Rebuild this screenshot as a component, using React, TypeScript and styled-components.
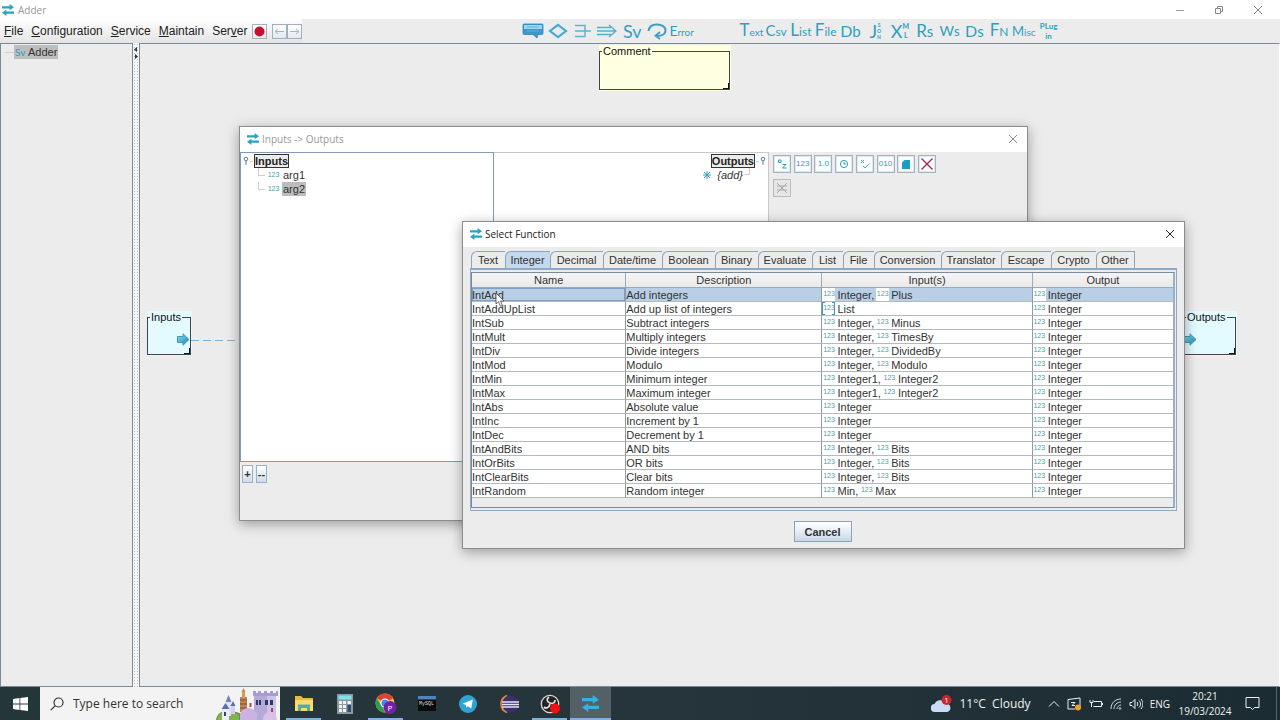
import React from 'react';
import styled, { createGlobalStyle, css } from 'styled-components';

const SANS = '"Liberation Sans", Arial, sans-serif';
const UI = '"Open Sans", "Noto Sans", sans-serif';
const THIN = 'Lato, "Liberation Sans", sans-serif';
const TEAL = '#2f9fc0';
const LINE = '#7a8a99';

const GlobalStyle = createGlobalStyle`
  *, *::before, *::after { box-sizing: border-box; }
  html, body { margin: 0; padding: 0; }
  body { background: #ececec; color: #333; font-family: ${SANS}; font-size: 11px; line-height: 14px; }
  button, input { font: inherit; color: inherit; margin: 0; }
  svg { display: block; flex: none; }
`;

/* ---------- application frame ---------- */

const Desktop = styled.div`
  position: relative;
  display: flex;
  flex-direction: column;
  min-height: 100vh;
  overflow: hidden;
`;

const FrameTitle = styled.header`
  display: flex;
  align-items: center;
  gap: 4px;
  height: 19px;
  padding: 0 14px 0 2px;
  background: #fff;
  color: #999;
  font-family: ${UI};
`;

const FrameName = styled.h1`
  flex: 1;
  margin: 0;
  font-size: 10px;
  line-height: 18px;
  font-weight: 400;
`;

const FrameControls = styled.div`
  display: flex;
  gap: 23px;
`;

const PlainButton = styled.button`
  display: flex;
  align-items: center;
  justify-content: center;
  padding: 0;
  border: 0;
  background: none;
`;

const ControlButton = styled(PlainButton)`
  width: 16px;
  height: 16px;
`;

const MenuRow = styled.div`
  display: flex;
  align-items: stretch;
  height: 24px;
  background: #ececec;
`;

const MenuSide = styled.div`
  flex: 0 0 521px;
  display: flex;
`;

const MenuBar = styled.nav`
  display: flex;
  align-items: center;
  gap: 8px;
  padding-left: 4px;
  background: linear-gradient(#fefefe, #e4e4e4);
  font-size: 12px;
  color: #222;
`;

const MenuItem = styled(PlainButton)`
  display: block;
  line-height: 16px;
`;

const MenuTools = styled.div`
  display: flex;
  align-items: center;
  padding-left: 4px;
  background: linear-gradient(#fefefe, #e4e4e4);
`;

const SquareButton = styled.button<{ $gap?: number }>`
  display: flex;
  align-items: center;
  justify-content: center;
  width: 15px;
  height: 15px;
  margin-right: ${p => p.$gap ?? 0}px;
  padding: 0;
  border: 1px solid #9fb0c2;
  background: linear-gradient(#fff, #e3e9f0);
`;

const IconGroup = styled.div<{ $count: number; $width: number }>`
  display: grid;
  grid-template-columns: repeat(${p => p.$count}, minmax(0, 1fr));
  width: ${p => p.$width}px;
  margin-right: 45px;
`;

const IconButton = styled(PlainButton)`
  min-width: 0;
  color: ${TEAL};
`;

const GlyphWord = styled.span<{ $cap?: number; $rest?: number }>`
  display: block;
  white-space: nowrap;
  font-family: ${THIN};
  font-size: ${p => p.$rest ?? 13}px;
  line-height: 22px;
  &::first-letter { font-size: ${p => p.$cap ?? 17}px; }
`;

const GlyphPair = styled.span`
  display: flex;
  align-items: center;
  font-family: ${THIN};
  font-size: 18px;
  line-height: 20px;
`;

const GlyphStack = styled.span<{ $size: number; $step: number }>`
  display: grid;
  justify-items: center;
  font-family: ${THIN};
  font-size: ${p => p.$size}px;
  line-height: ${p => p.$step}px;
  font-weight: 700;
`;

/* ---------- workspace ---------- */

const Workspace = styled.div`
  flex: 1;
  display: flex;
  min-height: 643px;
`;

const Explorer = styled.aside`
  flex: 0 0 133px;
  border: 1px solid ${LINE};
  padding: 1px 0 0 4px;
`;

const TreeLine = styled.div`
  display: flex;
  align-items: center;
  height: 14px;
`;

const TreeDash = styled.span`
  width: 9px;
  border-top: 1px solid #c4d0dc;
`;

const ShortDash = styled.span`
  width: 3px;
  border-top: 1px solid #cfcfcf;
`;

const TreeLabel = styled.span<{ $selected?: boolean; $italic?: boolean }>`
  display: flex;
  align-items: center;
  gap: 1px;
  padding: 0 1px;
  line-height: 14px;
  background: ${p => (p.$selected ? '#bdbdbd' : 'transparent')};
  font-style: ${p => (p.$italic ? 'italic' : 'normal')};
`;

const ServiceMark = styled.span`
  width: 12px;
  color: ${TEAL};
  font-family: ${THIN};
  font-size: 10px;
`;

const Splitter = styled.div`
  flex: 0 0 6px;
  padding-top: 4px;
  background-color: #f6f6f6;
  background-image: radial-gradient(#b9c0c8 1px, transparent 1px);
  background-size: 3px 3px;
`;

const Canvas = styled.main`
  position: relative;
  flex: 1;
  min-width: 0;
  border: 1px solid ${LINE};
  border-right-color: #fff;
  background: #ececec;
`;

const Node = styled.div<{ $x: number; $y: number; $w: number; $h: number; $fill: string }>`
  position: absolute;
  left: ${p => p.$x}px;
  top: ${p => p.$y}px;
  width: ${p => p.$w}px;
  height: ${p => p.$h}px;
  display: flex;
  padding: 0 1px 1px 0;
  background: ${p => p.$fill};
`;

const NodeFrame = styled.fieldset<{ $end?: boolean }>`
  position: relative;
  flex: 1;
  min-width: 0;
  display: flex;
  justify-content: ${p => (p.$end ? 'flex-end' : 'flex-start')};
  margin: 0;
  padding: 10px 0 0;
  border: 1px solid #444;
  color: #111;
  &::after {
    content: '';
    position: absolute;
    right: 0;
    bottom: 0;
    width: 6px;
    height: 6px;
    border: solid #111;
    border-width: 0 1px 1px 0;
  }
`;

const NodeLegend = styled.legend`
  margin-left: 2px;
  padding: 0 1px;
  line-height: 12px;
`;

const Wire = styled.div`
  position: absolute;
  left: 51px;
  top: 296px;
  width: 60px;
  height: 1px;
  background: repeating-linear-gradient(90deg, #7fb0d8 0 8px, transparent 8px 12px);
`;

/* ---------- dialogs ---------- */

const Dialog = styled.section<{ $x: number; $y: number; $w: number }>`
  position: absolute;
  left: ${p => p.$x}px;
  top: ${p => p.$y}px;
  width: ${p => p.$w}px;
  border: 1px solid #8c8c8c;
  background: #ececec;
  box-shadow: 0 3px 12px rgba(0, 0, 0, 0.35);
`;

const DialogTitle = styled.header<{ $active?: boolean }>`
  display: flex;
  align-items: center;
  gap: 3px;
  height: 25px;
  padding: 0 6px 1px 7px;
  background: #fff;
  color: ${p => (p.$active ? '#222' : '#999')};
  font-family: ${UI};
`;

const DialogName = styled.h2`
  flex: 1;
  margin: 0;
  font-size: 10px;
  font-weight: 400;
  line-height: 16px;
`;

const MapperBody = styled.div`
  display: grid;
  grid-template-columns: 254px 275px 1fr;
  height: 310px;
`;

const InputTree = styled.div`
  border: 1px solid #7f9db9;
  background: #fff;
  padding: 1px 0 0 2px;
`;

const OutputTree = styled.div`
  display: flex;
  flex-direction: column;
  align-items: flex-end;
  padding: 1px 2px 0 0;
  border: 1px solid #c9c9c9;
  border-left: 0;
  background: #fff;
`;

const RootLine = styled.div`
  display: flex;
  align-items: center;
  gap: 1px;
  height: 14px;
`;

const RootLabel = styled.strong`
  border: 1px solid #333;
  background: #ececec;
  color: #222;
  line-height: 12px;
`;

const Branch = styled.ul`
  margin: 0 0 0 15px;
  padding: 0;
  list-style: none;
`;

const BranchItem = styled.li`
  display: flex;
  align-items: center;
  gap: 2px;
  height: 14px;
  &::before {
    content: '';
    align-self: flex-start;
    width: 7px;
    height: 8px;
    border: solid #cfcfcf;
    border-width: 0 0 1px 1px;
  }
`;

const OutputItem = styled.div`
  display: flex;
  align-items: center;
  gap: 5px;
  height: 14px;
  margin-right: 16px;
  &::after {
    content: '';
    align-self: flex-start;
    width: 6px;
    height: 7px;
    margin-left: -5px;
    border: solid #cfcfcf;
    border-width: 0 1px 1px 0;
  }
`;

const ToolPanel = styled.div`
  display: flex;
  flex-direction: column;
  gap: 6px;
  padding: 3px 3px 3px 4px;
`;

const ToolRow = styled.div`
  display: flex;
  justify-content: space-between;
  width: 163px;
`;

const ToolButton = styled.button`
  display: flex;
  align-items: center;
  justify-content: center;
  width: 18px;
  height: 18px;
  padding: 0;
  border: 1px solid #a3b3c2;
  background: #fbfdfe;
  box-shadow: inset 0 0 0 1px #dfe6ec;
  color: #2f9fb5;
  font-size: 8px;
  line-height: 14px;
  &:disabled { background: #e6e6e6; box-shadow: none; border-color: #bbb; }
`;

const MapperFooter = styled.footer`
  display: flex;
  gap: 3px;
  height: 58px;
  padding: 3px 2px;
`;

const StepButton = styled.button`
  width: 11px;
  height: 18px;
  padding: 0;
  border: 1px solid #9fb0c2;
  background: linear-gradient(#fff, #cfdcea);
  font-weight: 700;
`;

/* ---------- function picker ---------- */

const TabList = styled.div`
  display: flex;
  height: 17px;
  margin: 4px 7px 0 8px;
`;

const Tab = styled.button<{ $width: number; $active?: boolean }>`
  flex: 0 0 ${p => p.$width}px;
  padding: 0 1px 0 0;
  border: 1px solid #8fa3b8;
  border-width: 1px 0 0 1px;
  border-top-left-radius: 6px 6px;
  background: ${p => (p.$active ? '#c4d8ee' : '#ececec')};
  line-height: 16px;
  white-space: nowrap;
  &:last-child { border-right-width: 1px; }
`;

const TabPane = styled.div`
  height: 243px;
  margin: 0 7px;
  padding: 2px 1px 2px 0;
  border: 1px solid #8fa8c4;
  border-top-width: 2px;
`;

const Scroller = styled.div`
  height: 100%;
  border: 1px solid ${LINE};
  border-right-width: 2px;
  border-right-color: #9bb0c6;
`;

const Table = styled.table`
  width: 100%;
  table-layout: fixed;
  border-collapse: separate;
  border-spacing: 0;
`;

const HeadCell = styled.th<{ $share?: number }>`
  width: ${p => (p.$share ? `${p.$share}%` : 'auto')};
  height: 15px;
  padding: 0;
  border: solid #9aabb9;
  border-width: 0 1px 1px 0;
  background: linear-gradient(#f6f6f6, #e9e9e9);
  font-weight: 400;
  line-height: 14px;
  &:last-child { border-right: 0; }
`;

const Cell = styled.td<{ $focus?: boolean }>`
  height: 14px;
  padding: 1px 0 0;
  border: solid #b3b9bf;
  border-width: 0 1px 1px 0;
  border-right-color: #8f9ba8;
  line-height: 12px;
  white-space: nowrap;
  &:last-child { border-right: 0; }
  ${p => p.$focus && css`box-shadow: inset 0 0 0 1px #7f9fc4;`}
`;

const Row = styled.tr<{ $selected?: boolean }>`
  background: ${p => (p.$selected ? '#b8cfe5' : '#fff')};
`;

const Params = styled.div`
  display: flex;
  align-items: flex-end;
  gap: 2px;
  height: 12px;
`;

const corner = `linear-gradient(${TEAL}, ${TEAL}) no-repeat`;

const TypeMark = styled.span<{ $list?: boolean }>`
  flex: 0 0 13px;
  height: 13px;
  background: #fff;
  color: #3fa5a8;
  font-size: 7px;
  line-height: 12px;
  text-align: center;
  ${p => p.$list && css`
    background:
      ${corner} 0 0 / 3px 1px, ${corner} 100% 0 / 3px 1px,
      ${corner} 0 100% / 3px 1px, ${corner} 100% 100% / 3px 1px,
      ${corner} 0 0 / 1px 100%, ${corner} 100% 0 / 1px 100%, #fff;
  `}
`;

const PickerFooter = styled.footer`
  display: flex;
  justify-content: center;
  height: 37px;
  padding: 10px 2px 0 0;
`;

const CancelButton = styled.button`
  width: 58px;
  height: 21px;
  padding: 0;
  border: 1px solid #8ea1b5;
  background: linear-gradient(#fff, #e6edf5 50%, #c6d7e8);
  font-weight: 700;
`;

const Pointer = styled.svg`
  position: absolute;
  left: 32px;
  top: 70px;
`;

/* ---------- taskbar ---------- */

const Taskbar = styled.footer`
  display: flex;
  height: 33px;
  background: linear-gradient(90deg, #25363b, #26353b 50%, #1b2c32);
  color: #f0f0f0;
  font-family: ${UI};
`;

const StartButton = styled(PlainButton)`
  width: 40px;
`;

const Search = styled.label`
  display: flex;
  align-items: center;
  gap: 9px;
  width: 240px;
  padding-left: 10px;
  background: #f3f3f3;
  color: #333;
`;

const SearchInput = styled.input`
  flex: 1;
  min-width: 0;
  padding: 0;
  border: 0;
  outline: 0;
  background: transparent;
  font-size: 12px;
  &::placeholder { color: #333; opacity: 1; }
`;

const TaskList = styled.div`
  flex: 1;
  display: flex;
  padding-left: 3px;
`;

const TaskButton = styled(PlainButton)<{ $open?: boolean; $active?: boolean }>`
  width: 41px;
  background: ${p => (p.$active ? '#536166' : 'none')};
  box-shadow: ${p => (p.$active ? 'inset 0 -2px #7fb2dc' : 'none')};
  position: relative;
  ${p => p.$open && css`
    &::after {
      content: '';
      position: absolute;
      left: 3px;
      right: 3px;
      bottom: 0;
      height: 2px;
      background: #7fb2dc;
    }
  `}
`;

const Weather = styled(PlainButton)`
  gap: 7px;
  margin-right: 10px;
  font-size: 12px;
  white-space: pre;
`;

const Tray = styled.div`
  display: flex;
  align-items: center;
  gap: 7px;
  font-size: 10px;
`;

const Clock = styled.time`
  width: 54px;
  margin: 0 6px 0 1px;
  text-align: center;
  font-size: 10px;
  line-height: 15px;
`;

const ShowDesktop = styled.div`
  width: 4px;
  margin-left: 9px;
  border-left: 1px solid #56656a;
  align-self: stretch;
`;

/* ---------- drawings ---------- */

const SwapIcon = ({ size = 12, color = '#2aa3bd' }: { size?: number; color?: string }) => (
  <svg width={size} height={size} viewBox="0 0 12 12" fill={color} aria-hidden="true">
    <path d="M0 2.200h7.600V0L12 3.300 7.600 6.200V4.400H0z" />
    <path d="M12 7.600H4.400V5.800L0 8.700 4.400 12V9.800H12z" />
  </svg>
);

const CloseIcon = ({ color }: { color: string }) => (
  <svg width="10" height="10" viewBox="0 0 10 10" stroke={color} fill="none" aria-hidden="true">
    <path d="M1 1l8 8M9 1L1 9" />
  </svg>
);

const ArrowNode = () => (
  <svg width="13" height="13" viewBox="0 0 13 13" aria-hidden="true">
    <defs>
      <linearGradient id="arrowFill" x1="0" y1="0" x2="1" y2="1">
        <stop offset="0" stopColor="#8fdcf2" />
        <stop offset="1" stopColor="#1487ab" />
      </linearGradient>
    </defs>
    <path d="M.5 3.500h5.500V.8l6 5.700-6 5.700V9.500H.5z" fill="url(#arrowFill)" stroke="#3b9dbb" />
  </svg>
);

const HandleIcon = () => (
  <svg width="6" height="10" viewBox="0 0 6 10" fill="none" stroke="#5b7d99" aria-hidden="true">
    <circle cx="3" cy="3" r="1.800" />
    <path d="M3 5v4" />
  </svg>
);

const CastleArt = () => (
  <svg width="66" height="33" viewBox="0 0 66 33" aria-hidden="true">
    <path d="M2 33c1-7 7-10 15-9s13 3 16 9z" fill="#5f9a45" />
    <path d="M5 28c5-5 14-4 20 0v5H3z" fill="#7fb454" />
    <rect x="40" y="8" width="22" height="25" fill="#b3aad8" />
    <rect x="53" y="8" width="9" height="25" fill="#cbc3e8" />
    <path d="M39 9V4h3v2h2V4h3v2h3V4h3v2h3V4h3v2h3V4h2v5z" fill="#a69ccf" />
    <rect x="42" y="13" width="2" height="5" fill="#2f3763" />
    <rect x="45" y="13" width="2" height="5" fill="#2f3763" />
    <rect x="51" y="13" width="3" height="5" fill="#2f3763" />
    <rect x="56" y="13" width="3" height="5" fill="#2f3763" />
    <rect x="26" y="10" width="7" height="15" fill="#c18552" />
    <path d="M26 13h7M26 17h7M26 21h7" stroke="#7d4a34" />
    <rect x="28" y="4" width="3" height="7" fill="#d99c4f" />
    <path d="M27.500 5l2-4 2 4z" fill="#c98a45" />
    <rect x="12" y="15" width="5" height="14" fill="#e3e0f4" />
    <path d="M11.500 15l3-7 3 7z" fill="#7184b9" />
    <rect x="8" y="22" width="7" height="11" fill="#eeecfa" />
    <path d="M7.500 22l4-6 4 6z" fill="#5672ac" />
    <rect x="10" y="25" width="2" height="4" fill="#394575" />
    <rect x="17" y="19" width="4" height="8" fill="#d5cfee" />
    <path d="M16.500 19l2.500-5 2.500 5z" fill="#5672ac" />
    <path d="M26 33v-5c1-5 5-7 8-7s8 2 9 7v5z" fill="#cbb2e2" />
    <path d="M35.500 20v-4h2v4z" fill="#b6434e" />
    <path d="M49 33c0-6 4-8 7-8s7 3 7 8z" fill="#dcc0e6" />
    <path d="M57 25v-4h2v4z" fill="#b6434e" />
  </svg>
);

/* ---------- data ---------- */

const MENUS: [string, string, string][] = [
  ['', 'F', 'ile'],
  ['', 'C', 'onfiguration'],
  ['', 'S', 'ervice'],
  ['', 'M', 'aintain'],
  ['Ser', 'v', 'er'],
];

const WORDS: { id: string; cap: number; rest: number }[] = [
  { id: 'Text', cap: 17, rest: 10 },
  { id: 'Csv', cap: 15, rest: 12 },
  { id: 'List', cap: 17, rest: 12 },
  { id: 'File', cap: 17, rest: 12 },
  { id: 'Db', cap: 16, rest: 15 },
];

const SHORT_WORDS: { id: string; cap: number; rest: number }[] = [
  { id: 'Rs', cap: 17, rest: 15 },
  { id: 'Ws', cap: 14, rest: 13 },
  { id: 'Ds', cap: 16, rest: 15 },
  { id: 'FN', cap: 17, rest: 12 },
];

const TABS: [string, number][] = [
  ['Text', 34], ['Integer', 45], ['Decimal', 53], ['Date/time', 59], ['Boolean', 53],
  ['Binary', 43], ['Evaluate', 54], ['List', 31], ['File', 31], ['Conversion', 67],
  ['Translator', 60], ['Escape', 50], ['Crypto', 45], ['Other', 39],
];

const FUNCTIONS: [string, string, string[]][] = [
  ['IntAdd', 'Add integers', ['Integer', 'Plus']],
  ['IntAddUpList', 'Add up list of integers', ['List']],
  ['IntSub', 'Subtract integers', ['Integer', 'Minus']],
  ['IntMult', 'Multiply integers', ['Integer', 'TimesBy']],
  ['IntDiv', 'Divide integers', ['Integer', 'DividedBy']],
  ['IntMod', 'Modulo', ['Integer', 'Modulo']],
  ['IntMin', 'Minimum integer', ['Integer1', 'Integer2']],
  ['IntMax', 'Maximum integer', ['Integer1', 'Integer2']],
  ['IntAbs', 'Absolute value', ['Integer']],
  ['IntInc', 'Increment by 1', ['Integer']],
  ['IntDec', 'Decrement by 1', ['Integer']],
  ['IntAndBits', 'AND bits', ['Integer', 'Bits']],
  ['IntOrBits', 'OR bits', ['Integer', 'Bits']],
  ['IntClearBits', 'Clear bits', ['Integer', 'Bits']],
  ['IntRandom', 'Random integer', ['Min', 'Max']],
];

/* ---------- parts ---------- */

const FlowIcons = () => (
  <IconGroup $count={7} $width={173}>
    <IconButton aria-label="Comment">
      <svg width="22" height="16" viewBox="0 0 22 16">
        <path d="M2 1h18q1 0 1 1v8q0 1.500-1 1.500h-4L15 15l-4-3.500H2Q1 11.500 1 10V2q0-1 1-1z" fill="#3d97cb" stroke="#2f86b8" strokeWidth=".8" />
        <path d="M2 2h18v4H2z" fill="#9ed6f0" />
        <path d="M5 4h12M5 8h12" stroke="#5eb2db" />
      </svg>
    </IconButton>
    <IconButton aria-label="Decision">
      <svg width="20" height="16" viewBox="0 0 20 16" fill="none" stroke="#43acd0" strokeWidth="2.200">
        <path d="M10 1.800L18 8l-8 6.200L2 8z" />
      </svg>
    </IconButton>
    <IconButton aria-label="Merge">
      <svg width="18" height="14" viewBox="0 0 18 14" fill="none" stroke="#5db4cf" strokeWidth="1.500">
        <path d="M1 1.500h10v11H1M1 7h16" />
      </svg>
    </IconButton>
    <IconButton aria-label="Parallel">
      <svg width="20" height="14" viewBox="0 0 20 14" fill="none" stroke="#4fb0d0" strokeWidth="1.400">
        <path d="M0 3.500h14M0 7h18M0 10.500h14M12 1l7 6-7 6" />
      </svg>
    </IconButton>
    <IconButton aria-label="Service"><GlyphPair>Sv</GlyphPair></IconButton>
    <IconButton aria-label="Loop">
      <svg width="20" height="17" viewBox="0 0 20 17" fill="none" stroke="#3f9fc6" strokeWidth="2">
        <path d="M1.500 8C2 4 5 1.500 10 1.500S18.500 4 18.500 7.500 15 13 9.500 13" />
        <path d="M13 9L8.500 12.800 13 16" strokeWidth="1.800" />
      </svg>
    </IconButton>
    <IconButton aria-label="Error"><GlyphWord $cap={14} $rest={10}>Error</GlyphWord></IconButton>
  </IconGroup>
);

const TypeIcons = () => (
  <IconGroup $count={13} $width={322}>
    {WORDS.map(w => (
      <IconButton key={w.id}><GlyphWord $cap={w.cap} $rest={w.rest}>{w.id}</GlyphWord></IconButton>
    ))}
    <IconButton>
      <GlyphPair>J<GlyphStack $size={5} $step={6}><span>S</span><span>O</span><span>N</span></GlyphStack></GlyphPair>
    </IconButton>
    <IconButton>
      <GlyphPair>X<GlyphStack $size={7} $step={9}><span>M</span><span>L</span></GlyphStack></GlyphPair>
    </IconButton>
    {SHORT_WORDS.map(w => (
      <IconButton key={w.id}><GlyphWord $cap={w.cap} $rest={w.rest}>{w.id}</GlyphWord></IconButton>
    ))}
    <IconButton><GlyphWord $cap={13} $rest={10}>Misc</GlyphWord></IconButton>
    <IconButton><GlyphStack $size={8} $step={10}><span>PLug</span><span>in</span></GlyphStack></IconButton>
  </IconGroup>
);

const MapperDialog = () => (
  <Dialog $x={239} $y={126} $w={789} aria-label="Inputs to Outputs">
    <DialogTitle>
      <SwapIcon />
      <DialogName>Inputs -&gt; Outputs</DialogName>
      <ControlButton aria-label="Close"><CloseIcon color="#888" /></ControlButton>
    </DialogTitle>
    <MapperBody>
      <InputTree>
        <RootLine><HandleIcon /><ShortDash /><RootLabel>Inputs</RootLabel></RootLine>
        <Branch>
          {['arg1', 'arg2'].map(name => (
            <BranchItem key={name}>
              <TypeMark>123</TypeMark>
              <TreeLabel $selected={name === 'arg2'}>{name}</TreeLabel>
            </BranchItem>
          ))}
        </Branch>
      </InputTree>
      <OutputTree>
        <RootLine><RootLabel>Outputs</RootLabel><ShortDash /><HandleIcon /></RootLine>
        <OutputItem>
          <svg width="8" height="8" viewBox="0 0 8 8" stroke="#2f9fb5" fill="none">
            <path d="M4 0v8M0 4h8M1 1l6 6M7 1L1 7" />
          </svg>
          <TreeLabel $italic>{'{add}'}</TreeLabel>
        </OutputItem>
      </OutputTree>
      <ToolPanel>
        <ToolRow>
          <ToolButton aria-label="Text">
            <svg width="10" height="10" viewBox="0 0 10 10" fill="none" stroke="currentColor">
              <path d="M4 1H1.500v2.500H4V1M5.500 5.500H9L5.500 9H9.500" />
            </svg>
          </ToolButton>
          <ToolButton>123</ToolButton>
          <ToolButton>1.0</ToolButton>
          <ToolButton aria-label="Date">
            <svg width="10" height="10" viewBox="0 0 10 10" fill="none" stroke="currentColor">
              <circle cx="5" cy="5" r="3.600" /><path d="M5 2.800V5h2" />
            </svg>
          </ToolButton>
          <ToolButton aria-label="Boolean">
            <svg width="10" height="10" viewBox="0 0 10 10" fill="none" stroke="currentColor" strokeWidth=".9">
              <path d="M1 1l3 3M4 1L1 4M3 7l2 2 4.500-4.500" />
            </svg>
          </ToolButton>
          <ToolButton>010</ToolButton>
          <ToolButton aria-label="File">
            <svg width="8" height="9" viewBox="0 0 8 9" fill="#1d9cc4"><path d="M2.500 0H8v9H0V2.500z" /></svg>
          </ToolButton>
          <ToolButton aria-label="Delete">
            <svg width="14" height="14" viewBox="0 0 14 14" stroke="#b0264a" strokeWidth="1.400" fill="none">
              <path d="M1.500 1.500l11 11M12.500 1.500l-11 11" />
            </svg>
          </ToolButton>
        </ToolRow>
        <ToolRow>
          <ToolButton disabled aria-label="Clear mapping">
            <svg width="12" height="12" viewBox="0 0 12 12" stroke="#aaa" fill="none">
              <path d="M1 1l10 10M11 1L1 11M1 4h10M1 8h10" />
            </svg>
          </ToolButton>
        </ToolRow>
      </ToolPanel>
    </MapperBody>
    <MapperFooter>
      <StepButton>+</StepButton>
      <StepButton>--</StepButton>
    </MapperFooter>
  </Dialog>
);

const PickerDialog = () => (
  <Dialog $x={462} $y={221} $w={723} aria-label="Select Function">
    <DialogTitle $active>
      <SwapIcon />
      <DialogName>Select Function</DialogName>
      <ControlButton aria-label="Close"><CloseIcon color="#222" /></ControlButton>
    </DialogTitle>
    <TabList role="tablist">
      {TABS.map(([name, width]) => (
        <Tab key={name} role="tab" $width={width} $active={name === 'Integer'} aria-selected={name === 'Integer'}>
          {name}
        </Tab>
      ))}
    </TabList>
    <TabPane role="tabpanel">
      <Scroller>
        <Table>
          <thead>
            <tr>
              <HeadCell $share={22}>Name</HeadCell>
              <HeadCell $share={28}>Description</HeadCell>
              <HeadCell $share={30}>Input(s)</HeadCell>
              <HeadCell>Output</HeadCell>
            </tr>
          </thead>
          <tbody>
            {FUNCTIONS.map(([name, description, params], index) => (
              <Row key={name} $selected={index === 0}>
                <Cell $focus={index === 0}>{name}</Cell>
                <Cell>{description}</Cell>
                <Cell>
                  <Params>
                    {params.map((param, i) => (
                      <React.Fragment key={param}>
                        <TypeMark $list={param === 'List'}>123</TypeMark>
                        <span>{param}{i < params.length - 1 ? ',' : ''}</span>
                      </React.Fragment>
                    ))}
                  </Params>
                </Cell>
                <Cell>
                  <Params><TypeMark>123</TypeMark><span>Integer</span></Params>
                </Cell>
              </Row>
            ))}
          </tbody>
        </Table>
      </Scroller>
    </TabPane>
    <PickerFooter><CancelButton>Cancel</CancelButton></PickerFooter>
    <Pointer width="10" height="16" viewBox="0 0 10 16" aria-hidden="true">
      <path d="M1 1v11l2.500-2.300 2 4.600 2-.9-2-4.400H9z" fill="#fff" stroke="#444" strokeWidth=".8" />
    </Pointer>
  </Dialog>
);

const TaskbarApps = () => (
  <TaskList>
    <TaskButton $open aria-label="File Explorer">
      <svg width="20" height="17" viewBox="0 0 20 17">
        <path d="M1 1h6l2 2h10v13H1z" fill="#e9b93c" />
        <path d="M1 5h18v11H1z" fill="#fbdc6b" />
        <path d="M4 16V9.500h12V16h-3v-3H7v3z" fill="#5aa6b8" />
      </svg>
    </TaskButton>
    <TaskButton aria-label="Calculator">
      <svg width="16" height="20" viewBox="0 0 16 20">
        <rect width="16" height="20" fill="#8b979c" />
        <rect x="1.500" y="1.500" width="13" height="4" fill="#7fe0ee" />
        <g fill="#eef3f5">
          <rect x="2" y="7" width="3" height="3" /><rect x="6" y="7" width="3" height="3" /><rect x="10.500" y="7" width="3.500" height="3" />
          <rect x="2" y="11" width="3" height="3" /><rect x="6" y="11" width="3" height="3" />
          <rect x="2" y="15" width="3" height="3" /><rect x="6" y="15" width="3" height="3" />
        </g>
        <rect x="10.500" y="11" width="3.500" height="7" fill="#274b78" />
      </svg>
    </TaskButton>
    <TaskButton $open aria-label="Chrome">
      <svg width="22" height="22" viewBox="0 0 22 22">
        <circle cx="10" cy="10" r="9.500" fill="#f4c430" />
        <path d="M10 10L1.800 5.200A9.500 9.500 0 0 1 18.300 5.300z" fill="#dd4437" />
        <path d="M1.800 5.200L8 15l2 4.500A9.500 9.500 0 0 1 1.800 5.200z" fill="#2f9e58" />
        <circle cx="10" cy="10" r="4.600" fill="#fff" />
        <circle cx="10" cy="10" r="3.500" fill="#4285f4" />
        <circle cx="15" cy="14.500" r="6.500" fill="#7420a8" />
        <text x="15" y="17.500" textAnchor="middle" fontSize="8" fill="#fff">P</text>
      </svg>
    </TaskButton>
    <TaskButton aria-label="MySQL Command Line">
      <svg width="18" height="15" viewBox="0 0 18 15">
        <rect width="18" height="15" fill="#0b0b0b" />
        <rect width="18" height="3.500" fill="#4e83bd" />
        <text x="1" y="9" fontSize="5" fill="#ddd" fontFamily="Liberation Mono, monospace">MySQL</text>
      </svg>
    </TaskButton>
    <TaskButton aria-label="Telegram">
      <svg width="18" height="18" viewBox="0 0 18 18">
        <circle cx="9" cy="9" r="9" fill="#2fa3d4" />
        <path d="M3.500 8.800L13.800 4.600 12.200 13.600 9 11.200 7.400 12.800 7 10z" fill="#fff" />
      </svg>
    </TaskButton>
    <TaskButton aria-label="Eclipse">
      <svg width="20" height="18" viewBox="0 0 20 18">
        <path d="M8 .5A9 9 0 0 0 8 17.500 10.500 10.500 0 0 1 8 .5z" fill="none" stroke="#e08a3c" strokeWidth="1.500" />
        <circle cx="11.500" cy="9" r="8.500" fill="#3c2f6e" />
        <path d="M3 7h17M3 9.500h17M3 12h17" stroke="#e8e4f4" strokeWidth="1.300" />
      </svg>
    </TaskButton>
    <TaskButton $open aria-label="OBS Studio">
      <svg width="20" height="20" viewBox="0 0 20 20">
        <circle cx="10" cy="10" r="8.700" fill="#222" stroke="#ddd" strokeWidth="1.300" />
        <path d="M9 3c-3 2-2 5 1 6M4 13c2 2 5 1 6-3M15 6c0 3-2 4-5 3" fill="none" stroke="#ddd" strokeWidth="1.800" />
        <circle cx="15" cy="14.500" r="5" fill="#f21111" />
      </svg>
    </TaskButton>
    <TaskButton $active aria-label="Adder"><SwapIcon size={17} color="#35b1e1" /></TaskButton>
  </TaskList>
);

const SystemTray = () => (
  <Tray>
    <Weather>
      <svg width="21" height="18" viewBox="0 0 21 18">
        <path d="M4 17a4 4 0 0 1-.5-8A6.500 6.500 0 0 1 15 8.500 4.300 4.300 0 0 1 16 17z" fill="#c9dcf5" />
        <circle cx="15.500" cy="5" r="5" fill="#c8262c" />
        <text x="15.500" y="8" textAnchor="middle" fontSize="8" fill="#fff">1</text>
      </svg>
      {'11°C  Cloudy'}
    </Weather>
    <svg width="12" height="8" viewBox="0 0 12 8" fill="none" stroke="#eee"><path d="M1 6.500l5-5 5 5" /></svg>
    <svg width="15" height="14" viewBox="0 0 15 14" fill="none" stroke="#eee">
      <path d="M1 2.500l12-1.500v9M1 2.500V12h7M4 5.500h4l-3 3h3" /><circle cx="11" cy="10.500" r="3" fill="#e8a32e" stroke="none" />
    </svg>
    <svg width="14" height="10" viewBox="0 0 14 10" fill="none" stroke="#eee">
      <path d="M5 2.500h7.500v5H4.500M13.500 4v2M1 1v2.500h3V1M2.500 3.500V8" />
    </svg>
    <svg width="12" height="12" viewBox="0 0 12 12" fill="none" stroke="#cfd6d8">
      <path d="M1 11C1 5 5 1 11 1M4 11c0-4 3-7 7-7M7 11c0-2 2-4 4-4" /><circle cx="10" cy="10.500" r=".8" />
    </svg>
    <svg width="14" height="12" viewBox="0 0 14 12" fill="none" stroke="#eee">
      <path d="M1 4.500h2l3-3v9l-3-3H1zM8 4c1 1 1 3 0 4M10 2.500c2 2 2 5 0 7M12 1c2.500 3 2.500 7 0 10" />
    </svg>
    <span>ENG</span>
    <Clock>20:21<br />19/03/2024</Clock>
    <svg width="15" height="15" viewBox="0 0 15 15" fill="none" stroke="#eee">
      <path d="M1 1.500h13v10H9.500l-2 2-2-2H1z" />
    </svg>
    <ShowDesktop />
  </Tray>
);

export default function App() {
  return (
    <Desktop>
      <GlobalStyle />
      <FrameTitle>
        <SwapIcon />
        <FrameName>Adder</FrameName>
        <FrameControls>
          <ControlButton aria-label="Minimise">
            <svg width="10" height="10" viewBox="0 0 10 10" stroke="#999"><path d="M1 5.500h8" /></svg>
          </ControlButton>
          <ControlButton aria-label="Restore">
            <svg width="10" height="10" viewBox="0 0 10 10" fill="none" stroke="#888">
              <path d="M1.500 3.500h5v5h-5zM3.500 3V1.500h5v5H7" />
            </svg>
          </ControlButton>
          <ControlButton aria-label="Close"><CloseIcon color="#888" /></ControlButton>
        </FrameControls>
      </FrameTitle>

      <MenuRow>
        <MenuSide>
          <MenuBar>
            {MENUS.map(([before, key, after]) => (
              <MenuItem key={after}>{before}<u>{key}</u>{after}</MenuItem>
            ))}
          </MenuBar>
          <MenuTools>
            <SquareButton $gap={5} aria-label="Stop server">
              <svg width="11" height="11" viewBox="0 0 11 11"><circle cx="5.500" cy="5.500" r="5" fill="#c8102e" /></svg>
            </SquareButton>
            <SquareButton aria-label="Back">
              <svg width="11" height="7" viewBox="0 0 11 7" fill="none" stroke="#aab4bd"><path d="M10 3.500H1M4 1L1 3.500 4 6" /></svg>
            </SquareButton>
            <SquareButton aria-label="Forward">
              <svg width="11" height="7" viewBox="0 0 11 7" fill="none" stroke="#aab4bd"><path d="M1 3.500h9M7 1l3 2.500L7 6" /></svg>
            </SquareButton>
          </MenuTools>
        </MenuSide>
        <FlowIcons />
        <TypeIcons />
      </MenuRow>

      <Workspace>
        <Explorer>
          <TreeLine>
            <TreeDash />
            <TreeLabel $selected><ServiceMark>Sv</ServiceMark>Adder</TreeLabel>
          </TreeLine>
        </Explorer>
        <Splitter>
          <svg width="6" height="12" viewBox="0 0 6 12" fill="#333"><path d="M4 0v5L1 2.500zM2 7v5l3-2.500z" /></svg>
        </Splitter>
        <Canvas>
          <Node $x={459} $y={1} $w={132} $h={46} $fill="#ffffe1">
            <NodeFrame><NodeLegend>Comment</NodeLegend></NodeFrame>
          </Node>
          <Node $x={7} $y={267} $w={45} $h={45} $fill="#e3faff">
            <NodeFrame $end><NodeLegend>Inputs</NodeLegend><ArrowNode /></NodeFrame>
          </Node>
          <Wire />
          <Node $x={1043} $y={267} $w={54} $h={45} $fill="#e3faff">
            <NodeFrame><NodeLegend>Outputs</NodeLegend><ArrowNode /></NodeFrame>
          </Node>
        </Canvas>
      </Workspace>

      <Taskbar>
        <StartButton aria-label="Start">
          <svg width="15" height="14" viewBox="0 0 15 14" fill="#fff">
            <path d="M0 2l6.500-1v5.600H0zM7.300.9L15 0v6.600H7.300zM0 7.400h6.500V13L0 12zM7.300 7.400H15V14l-7.700-1z" />
          </svg>
        </StartButton>
        <Search>
          <svg width="14" height="14" viewBox="0 0 14 14" fill="none" stroke="#333" strokeWidth="1.200">
            <circle cx="8.500" cy="5.500" r="4.500" /><path d="M5.300 8.700L.8 13.200" />
          </svg>
          <SearchInput type="text" aria-label="Search" placeholder="Type here to search" />
          <CastleArt />
        </Search>
        <TaskbarApps />
        <SystemTray />
      </Taskbar>

      <MapperDialog />
      <PickerDialog />
    </Desktop>
  );
}
